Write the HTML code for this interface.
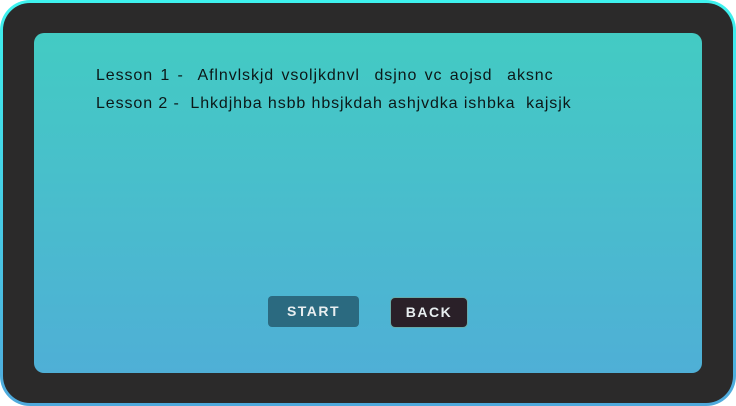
<html><head><style>
body{margin:0;width:736px;height:406px;overflow:hidden;background:#fff}
.o{position:absolute;left:0;top:0;width:736px;height:406px;border-radius:30px;background:linear-gradient(#3ef2ee,#4fa9dc)}
.i{position:absolute;left:3px;top:3px;width:730px;height:400px;border-radius:27px;background:#2b2a2a}
.p{position:absolute;left:34px;top:33px;width:668px;height:340px;border-radius:10px;background:linear-gradient(#43cbc3,#4fafd6)}
.t{position:absolute;left:96px;font:16px "Liberation Sans",sans-serif;color:#0c1818;letter-spacing:0.9px;white-space:pre}
.b{position:absolute;height:31px;border-radius:4px;color:#e8eef0;font:bold 14px "Liberation Sans",sans-serif;letter-spacing:1.5px;text-align:center;line-height:31px}
</style></head><body>
<div class="o"></div><div class="i"></div><div class="p"></div>
<div class="t" style="top:67px;word-spacing:2px">Lesson 1 -  Aflnvlskjd vsoljkdnvl  dsjno vc aojsd  aksnc</div>
<div class="t" style="top:95px">Lesson 2 -  Lhkdjhba hsbb hbsjkdah ashjvdka ishbka  kajsjk</div>
<div class="b" style="left:268px;top:296px;width:91px;background:#2b6a80">START</div>
<div class="b" style="left:390px;top:297px;width:76px;height:29px;line-height:29px;background:#2a2028;border:1px solid #6aa;border-radius:5px">BACK</div>
</body></html>
